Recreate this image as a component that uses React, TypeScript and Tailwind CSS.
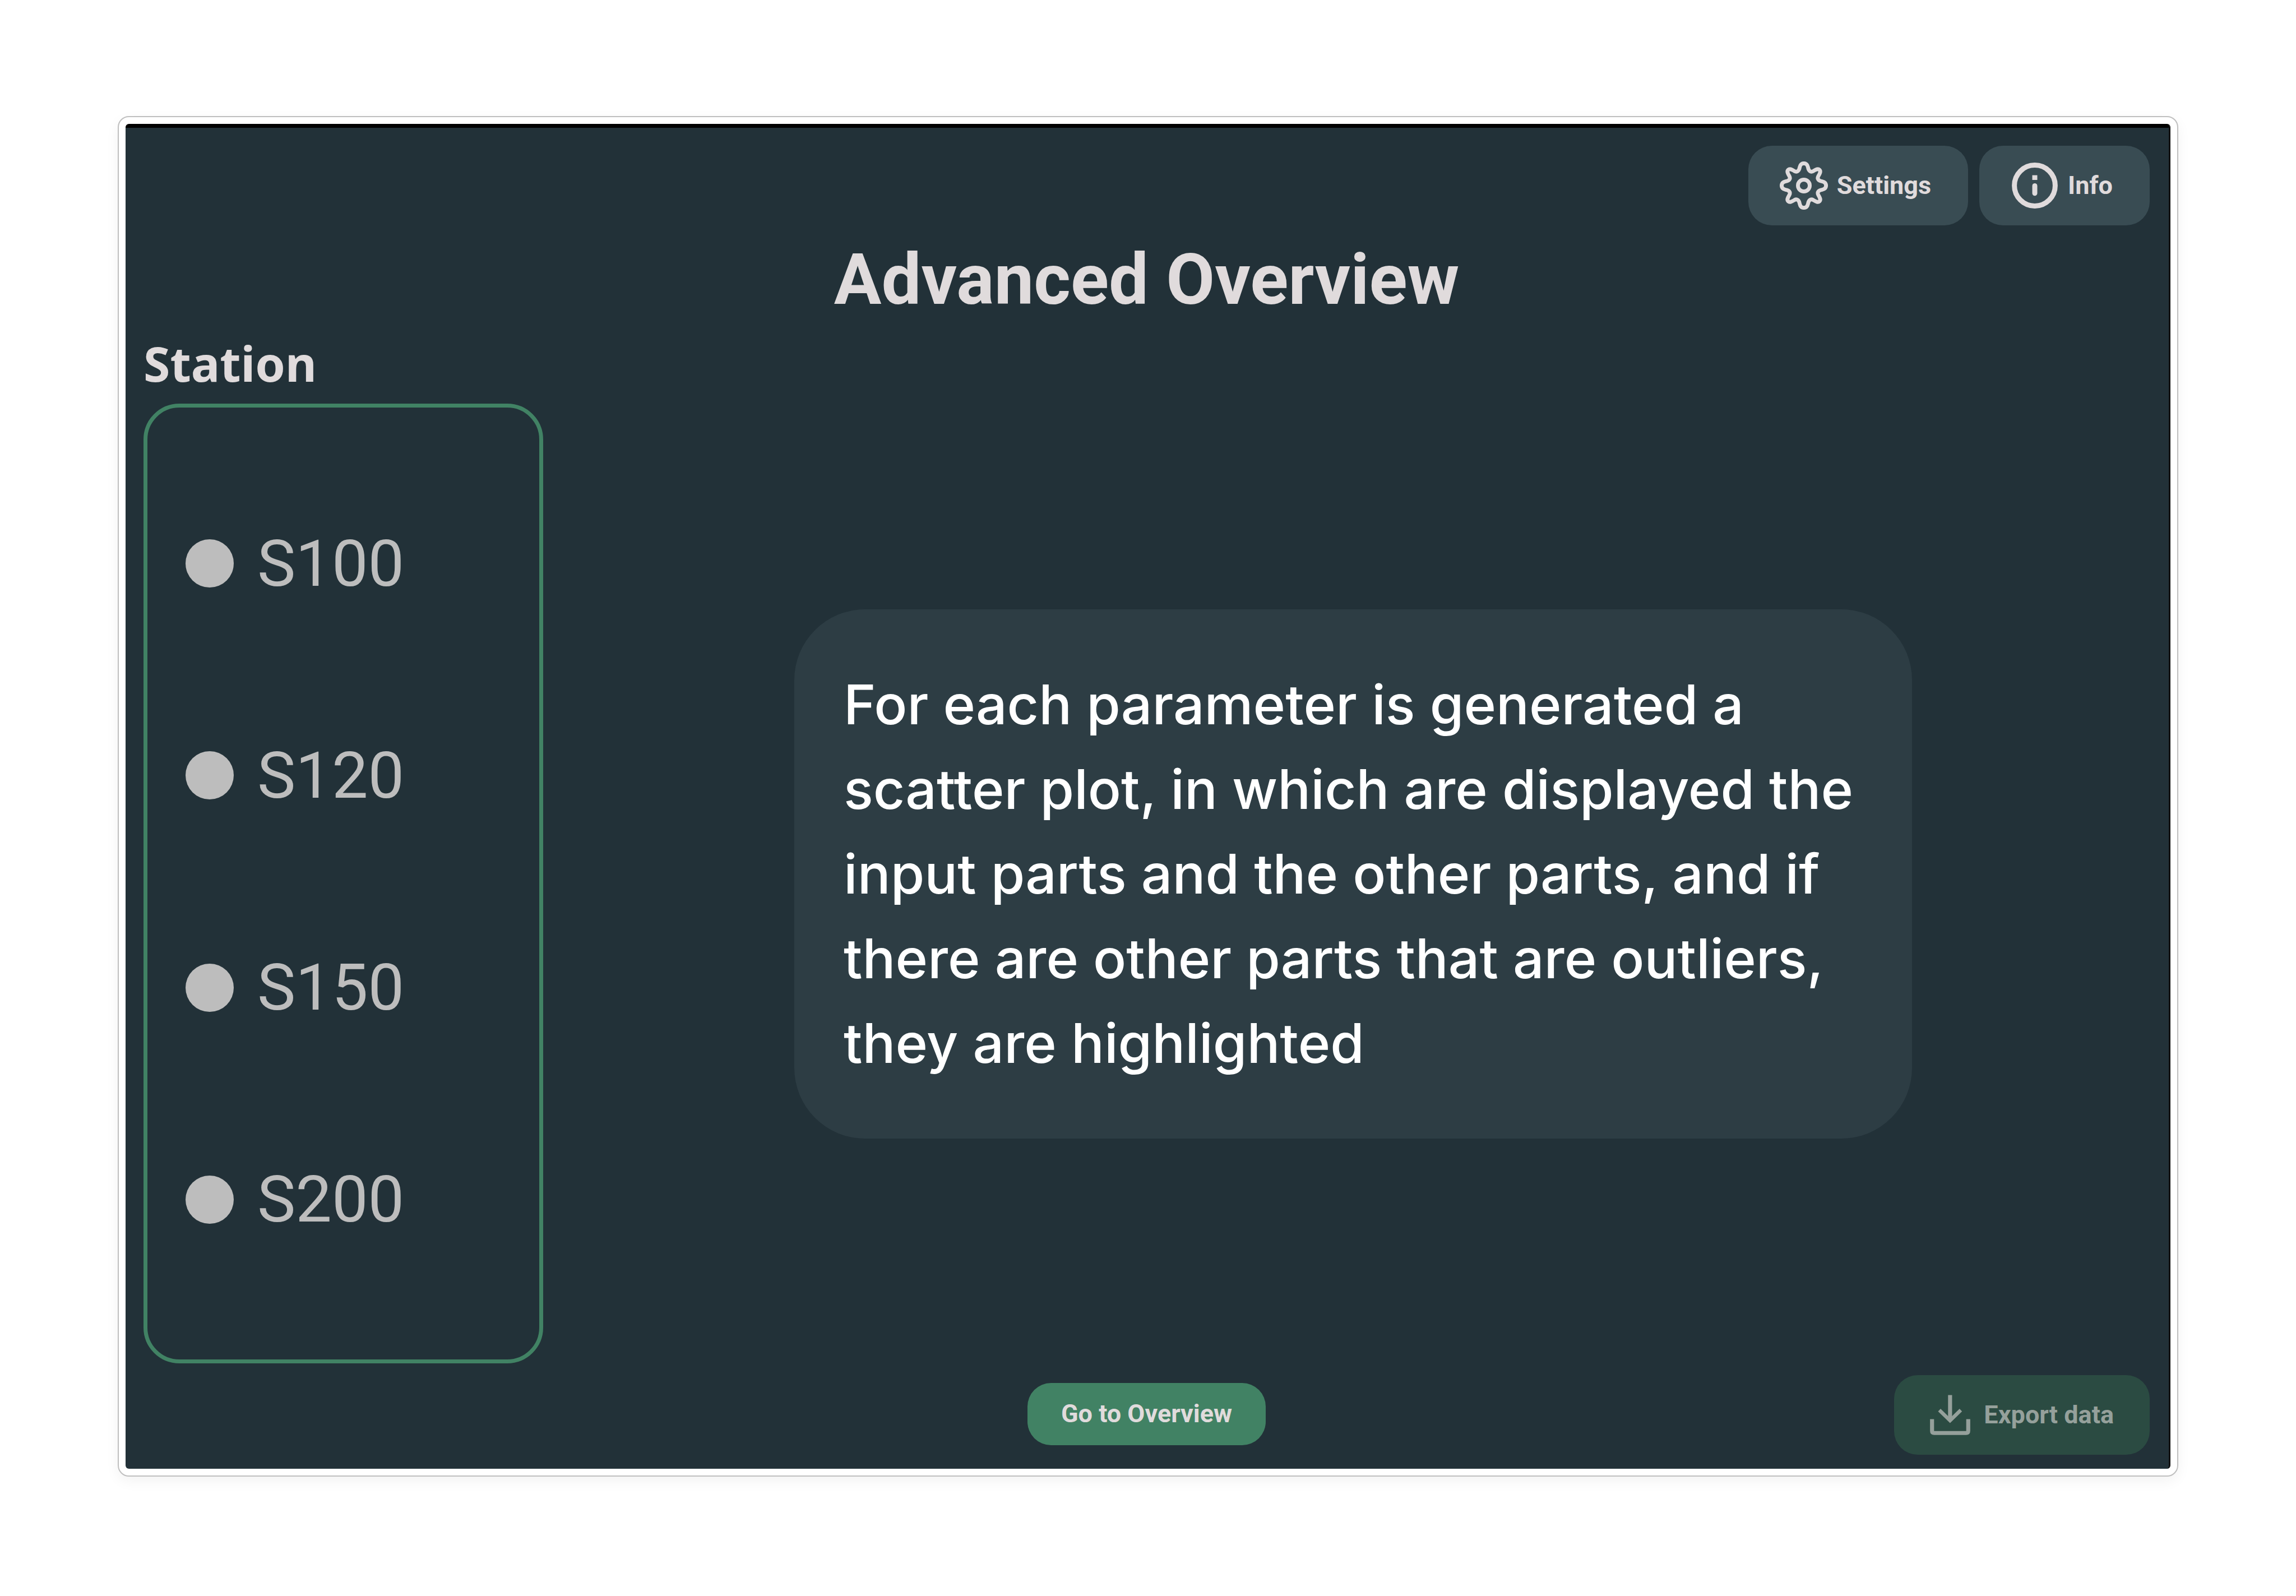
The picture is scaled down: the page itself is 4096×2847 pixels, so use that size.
import React from "react";

const stations = ["S100", "S120", "S150", "S200"];

const gearQuadrant =
  "M0-150C16-150 24-142 28-124C32-98 46-88 64-98C84-110 96-116 106-106C116-96 110-84 98-64C88-46 98-32 124-28C142-24 150-16 150 0";

function GearIcon() {
  return (
    <svg className="size-[86px] shrink-0" viewBox="-163 -163 326 326" fill="none" stroke="currentColor" strokeWidth="26" strokeLinejoin="round" strokeLinecap="round" aria-hidden="true">
      <path d={gearQuadrant} />
      <path d={gearQuadrant} transform="rotate(90)" />
      <path d={gearQuadrant} transform="rotate(180)" />
      <path d={gearQuadrant} transform="rotate(270)" />
      <circle r="40" />
    </svg>
  );
}

function InfoIcon() {
  return (
    <svg className="size-[86px] shrink-0" viewBox="-163 -163 326 326" fill="none" stroke="currentColor" strokeWidth="34" aria-hidden="true">
      <circle r="138" />
      <path d="M0-70v32" />
      <path d="M0 2v50" strokeLinecap="round" />
    </svg>
  );
}

function ExportIcon() {
  return (
    <svg className="size-[72px] shrink-0" viewBox="47 44 271 271" fill="none" stroke="currentColor" strokeWidth="27" aria-hidden="true">
      <path d="M182 46v172" />
      <path d="M110 147l72 70 72-70" strokeWidth="24" />
      <path d="M61 208v78q0 15 15 15h213q15 0 15-15v-78" />
    </svg>
  );
}

export default function App() {
  return (
    <div className="flex min-h-screen flex-col bg-white px-[210px] pt-[207px] pb-[213px] font-['Roboto',sans-serif] text-[#e0dbdc]">
      <div className="flex flex-1 flex-col rounded-[20px] border-2 border-[#bfbfbf] p-3 shadow-[0_8px_24px_rgba(0,0,0,0.05)]">
        <main className="flex flex-1 flex-col overflow-hidden rounded-md border-t-[7px] border-r-[3px] border-t-black border-r-[#111111] bg-[#223138] pt-8 pr-[34px] pb-[25px] pl-8">
          <header className="flex justify-end gap-5">
            <button className="flex h-[142px] items-center gap-4 rounded-[42px] bg-[#394c53] pr-[66px] pl-14 text-[45px] font-bold">
              <GearIcon />
              Settings
            </button>
            <button className="flex h-[142px] items-center gap-4 rounded-[42px] bg-[#394c53] pr-[66px] pl-14 text-[45px] font-bold">
              <InfoIcon />
              Info
            </button>
          </header>
          <h1 className="mt-[34px] text-center text-[126px] leading-[126px] font-bold">Advanced Overview</h1>
          <div className="mt-[43px] flex flex-1">
            <fieldset className="flex w-[713px] flex-col">
              <h2 id="station-title" className="font-['Noto_Sans',sans-serif] text-[86px] leading-[85px] font-bold">Station</h2>
              <div role="radiogroup" aria-labelledby="station-title" className="mt-[30px] flex flex-1 flex-col rounded-[64px] border-[7px] border-[#418264] pt-[89px] pb-24 pl-[68px] text-[#bdbdbd]">
                {stations.map((name) => (
                  <label key={name} className="flex flex-1 items-center gap-[42px] text-[115px] leading-none">
                    <input type="radio" name="station" value={name} className="size-[86px] appearance-none rounded-full bg-[#bdbdbd]" />
                    {name}
                  </label>
                ))}
              </div>
            </fieldset>
            <div className="flex flex-1 items-center justify-center pt-20 pl-6">
              <p className="w-[1994px] rounded-[126px] bg-[#2d3d44] pt-[94px] pr-[88px] pb-[95px] pl-[88px] font-['Inter',sans-serif] text-[98px] leading-[151px] font-medium text-white">
                For each parameter is generated a scatter plot, in which are displayed the input parts and the other parts, and if there are other parts that are outliers, they are highlighted
              </p>
            </div>
          </div>
          <footer className="mt-[21px] grid grid-cols-[1fr_auto_1fr] items-center">
            <button className="col-start-2 mb-1 h-[111px] rounded-[42px] bg-[#418264] px-[60px] text-[45px] font-bold">Go to Overview</button>
            <button disabled className="flex h-[142px] items-center gap-6 justify-self-end rounded-[42px] bg-[#2b4b42] px-16 text-[45px] font-bold text-[#95a09b]">
              <ExportIcon />
              Export data
            </button>
          </footer>
        </main>
      </div>
    </div>
  );
}
